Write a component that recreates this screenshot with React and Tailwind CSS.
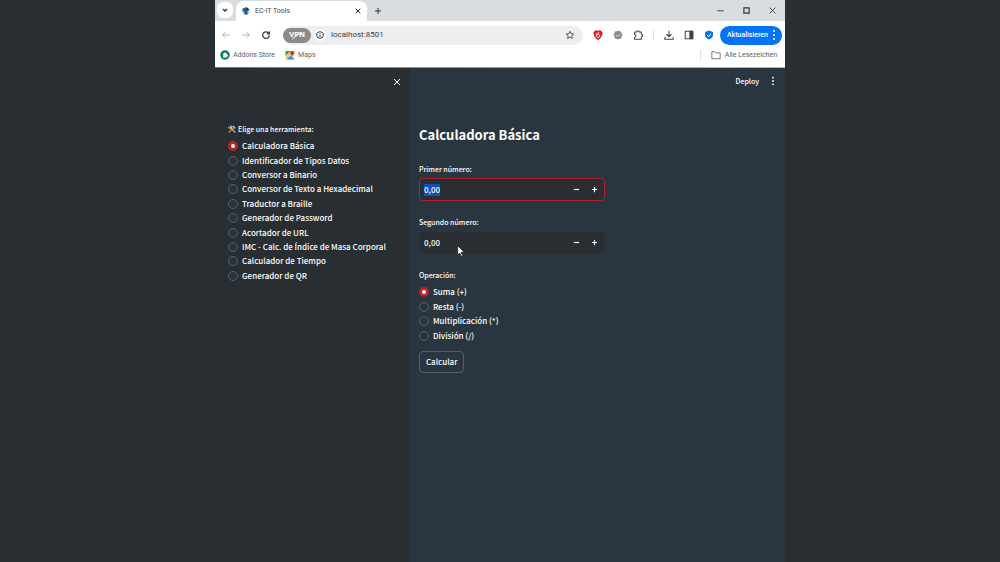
import React, { useState } from "react";

const tools = [
  "Calculadora Básica",
  "Identificador de Tipos Datos",
  "Conversor a Binario",
  "Conversor de Texto a Hexadecimal",
  "Traductor a Braille",
  "Generador de Password",
  "Acortador de URL",
  "IMC - Calc. de Índice de Masa Corporal",
  "Calculador de Tiempo",
  "Generador de QR",
];

const operations = ["Suma (+)", "Resta (-)", "Multiplicación (*)", "División (/)"];

function Icon({ children, className = "size-3", viewBox = "0 0 24 24" }) {
  return (
    <svg viewBox={viewBox} className={className} fill="none" stroke="currentColor" strokeWidth="2" aria-hidden="true">
      {children}
    </svg>
  );
}

function ToolsIcon() {
  return (
    <svg viewBox="0 0 20 20" className="size-2" aria-hidden="true">
      <path d="m6 6 11 12" stroke="#c3ced4" strokeWidth="3" strokeLinecap="round" />
      <path d="M1 4l3 3 3-3-3-3c4-1 7 2 6 6-2 3-5 3-7 2-2-1-3-3-2-5z" fill="#c3ced4" />
      <path d="M3 18 13 7" stroke="#e2953a" strokeWidth="3" strokeLinecap="round" />
      <path d="m10 3 3-2 6 5-1 4-3-1z" fill="#b3bec4" />
    </svg>
  );
}

function RadioGroup({ name, label, options, icon, listClassName }) {
  const [value, setValue] = useState(options[0]);
  return (
    <fieldset>
      <legend className="flex h-3 items-center gap-0.5 whitespace-nowrap text-[7px] leading-3">
        {icon}
        {label}
      </legend>
      <div className={listClassName}>
        {options.map((option) => (
          <label key={option} className="flex items-center gap-1 whitespace-nowrap text-[8px] leading-3">
            <input
              type="radio"
              name={name}
              checked={value === option}
              onChange={() => setValue(option)}
              className="size-2.5 shrink-0 appearance-none rounded-full border border-[#566169] bg-[#2a343b] checked:border-[3px] checked:border-[#b9212b] checked:bg-white"
            />
            {option}
          </label>
        ))}
      </div>
    </fieldset>
  );
}

function NumberField({ id, label, focused }) {
  return (
    <div>
      <label htmlFor={id} className="block text-[7px] leading-3">{label}</label>
      <div className={focused
        ? "mt-[3px] flex h-[23px] items-center rounded border border-[#b3202c] bg-[#282e31]"
        : "mt-[3px] flex h-[23px] items-center rounded border border-[#2b3439] bg-[#282e31]"}>
        <div className="relative flex min-w-0 flex-1 items-center pl-1">
          {focused && <span className="absolute left-1 h-3 w-4 bg-[#0f50c0]" />}
          <input id={id} type="text" inputMode="decimal" defaultValue="0,00" className="relative w-full min-w-0 bg-transparent text-[8px] leading-3 outline-none" />
        </div>
        <button type="button" aria-label="Restar" className="flex h-full w-[18px] items-center justify-center">
          <Icon className="size-[7px]"><path d="M3 12h18" strokeWidth="4" /></Icon>
        </button>
        <button type="button" aria-label="Sumar" className="flex h-full w-[18px] items-center justify-center">
          <Icon className="size-[7px]"><path d="M3 12h18M12 3v18" strokeWidth="4" /></Icon>
        </button>
      </div>
    </div>
  );
}

function Kebab({ className }) {
  return (
    <svg viewBox="0 0 4 12" className={className} fill="currentColor" aria-hidden="true">
      <circle cx="2" cy="2" r="1.1" /><circle cx="2" cy="6" r="1.1" /><circle cx="2" cy="10" r="1.1" />
    </svg>
  );
}

function TabStrip() {
  return (
    <div className="flex h-[21px] items-end bg-[#dadddf] pl-0.5">
      <button type="button" aria-label="Buscar pestañas" className="mb-[3px] flex size-4 items-center justify-center rounded-md bg-white">
        <Icon className="size-2"><path d="m6 9 6 6 6-6" strokeWidth="4" /></Icon>
      </button>
      <div className="ml-[3px] flex h-5 w-[131px] items-center rounded-t-lg bg-white px-[5px]">
        <svg viewBox="0 0 16 16" className="size-2.5" aria-hidden="true">
          <circle cx="8" cy="8" r="6" fill="#b7d3e6" />
          <path d="M3 4l6-2 4 4-3 3 1 4-5 1-1-5-3-2z" fill="#245d8c" />
          <path d="M9 2l4 3-3 2z" fill="#173854" />
        </svg>
        <span className="ml-1 flex-1 text-[7px] leading-3 text-[#44474a]">EC-IT Tools</span>
        <button type="button" aria-label="Cerrar pestaña"><Icon className="size-2"><path d="M5 5l14 14M19 5 5 19" strokeWidth="3" /></Icon></button>
      </div>
      <button type="button" aria-label="Nueva pestaña" className="mb-1.5 ml-[7px]"><Icon className="size-2"><path d="M3 12h18M12 3v18" strokeWidth="3" /></Icon></button>
      <div className="mb-[7px] ml-auto flex gap-[19px] pr-[9px]">
        <button type="button" aria-label="Minimizar"><Icon className="size-[7px]"><path d="M1 13h22" strokeWidth="3" /></Icon></button>
        <button type="button" aria-label="Maximizar"><Icon className="size-[7px]"><path d="M3 3h18v18H3z" strokeWidth="4" /></Icon></button>
        <button type="button" aria-label="Cerrar"><Icon className="size-[7px]"><path d="m2 2 20 20M22 2 2 22" strokeWidth="3" /></Icon></button>
      </div>
    </div>
  );
}

function Toolbar() {
  return (
    <div className="flex h-7 items-center pl-1.5 pr-[3px]">
      <button type="button" aria-label="Atrás" className="text-[#a0a3a6]"><Icon className="size-2.5"><path d="M21 12H4M11 5l-7 7 7 7" /></Icon></button>
      <button type="button" aria-label="Adelante" className="ml-2.5 text-[#a0a3a6]"><Icon className="size-2.5"><path d="M3 12h17M13 5l7 7-7 7" /></Icon></button>
      <button type="button" aria-label="Recargar" className="ml-2.5 text-[#3c3f42]"><Icon className="size-2.5"><path d="M20 13a8 8 0 1 1-2.500-6.500L20 9M20 3v6h-6" strokeWidth="3" /></Icon></button>
      <div className="ml-3 flex h-[19px] min-w-0 flex-1 items-center rounded-full bg-[#eeedef]">
        <span className="relative flex h-[15px] w-7 items-center justify-center rounded-full bg-[#8b8b8b] text-[8px] font-bold leading-none text-white">
          VPN
          <svg viewBox="0 0 28 15" className="absolute inset-0" aria-hidden="true"><path d="M9 11 19 4" stroke="#fff" /></svg>
        </span>
        <span className="ml-[3px] flex size-3 items-center justify-center rounded-full bg-white text-[#34373a]">
          <Icon className="size-2"><circle cx="12" cy="12" r="10" strokeWidth="3" /><path d="M12 11v7M12 6v3" strokeWidth="3" /></Icon>
        </span>
        <input aria-label="Dirección" defaultValue="localhost:8501" className="ml-[5px] min-w-0 flex-1 bg-transparent text-[8px] leading-3 text-[#3c3f42] outline-none" />
        <button type="button" aria-label="Marcador" className="mr-2 text-[#4a4d50]"><Icon className="size-2.5"><path d="m12 3 2.700 6 6.500.6-4.900 4.300 1.500 6.400L12 17l-5.800 3.300 1.500-6.400L2.800 9.600l6.500-.6z" strokeWidth="2.200" /></Icon></button>
      </div>
      <div className="ml-2.5 flex items-center gap-2.5 text-[#3f4245]">
        <svg viewBox="0 0 20 20" className="size-2.5" aria-hidden="true"><path d="M4 1h12l3 4c0 7-3 12-9 15C4 17 1 12 1 5z" fill="#df1c22" /><path d="M12.500 6c-3-1-6 1-6 5 0 2 1.500 4 3.500 4s3.500-1.500 3.500-3-1-3-3-3-3 1-3 2.500" fill="none" stroke="#fff" strokeWidth="2" /></svg>
        <svg viewBox="0 0 20 20" className="size-2.5" aria-hidden="true"><path d="m10 1 3 1.500 3.500.5.500 3.500L19 10l-2 3.500-.5 3.500-3.500.5L10 19l-3-1.500-3.500-.5-.5-3.500L1 10l2-3.500L3.500 3 7 2.500z" fill="#8c8c8c" /><path d="m6 10 3 3 5-5" fill="none" stroke="#e6e6e6" strokeWidth="2" /></svg>
        <Icon className="size-2.5"><path d="M4 5h5a3 3 0 0 1 6 0h5v5a3 3 0 0 1 0 6v6H4v-5a3 3 0 0 0 0-6z" strokeWidth="2.500" strokeLinejoin="round" /></Icon>
        <span className="h-2.5 w-px bg-[#dde1e7]" />
        <Icon className="size-2.5"><path d="M12 2v14M6 10l6 6 6-6M2 17v5h20v-5" strokeWidth="2.500" /></Icon>
        <Icon className="size-2.5"><path d="M3 3h18v18H3z" strokeWidth="2.500" /><path d="M14 3h7v18h-7z" fill="currentColor" /></Icon>
        <svg viewBox="0 0 20 20" className="size-2.5" aria-hidden="true"><path d="m10 1 8 3v6c0 4-3 7-8 9-5-2-8-5-8-9V4z" fill="#0877ed" /><path d="m6 10 3 3 5-5" fill="none" stroke="#fff" strokeWidth="2" /></svg>
      </div>
      <button type="button" className="ml-1.5 flex h-[19px] items-center gap-1 rounded-full bg-[#0573f5] pl-[7px] pr-1.5 text-[7px] font-medium leading-none text-white">
        Aktualisieren
        <Kebab className="h-3 w-1" />
      </button>
    </div>
  );
}

function Bookmarks() {
  return (
    <nav className="flex h-[18px] items-start pl-[5px] pr-2 text-[7px] leading-3 text-[#5c5f62]">
      <a href="#addons" className="flex items-center gap-[3px]">
        <svg viewBox="0 0 20 20" className="size-2.5" aria-hidden="true"><circle cx="10" cy="10" r="9.500" fill="#0c7b50" /><path d="M6 7h2a2 2 0 1 1 4 0h2v2a2 2 0 1 1 0 4v2H6v-3a2 2 0 0 0 0-3z" fill="#fff" /></svg>
        Addons Store
      </a>
      <a href="#maps" className="ml-2.5 flex items-center gap-[3px]">
        <svg viewBox="0 0 20 20" className="size-2.5" aria-hidden="true"><path d="M1 2h18v17H1z" fill="#d7e3e8" /><path d="M1 2h10L1 12z" fill="#21a35c" /><path d="m3 19 8-8 8 8z" fill="#4688ed" /><path d="m1 14 9-8 3 3L3 19z" fill="#f7cb46" /><path d="M14 13c0-3-4-4-4-7a4.500 4.500 0 1 1 9 0c0 3-4 4-5 7" fill="#e14235" /><circle cx="14.500" cy="6" r="1.500" fill="#81221c" /></svg>
        Maps
      </a>
      <span className="ml-auto mr-2.5 mt-px h-2.5 w-px bg-[#dde1e7]" />
      <a href="#all" className="flex items-center gap-1">
        <Icon className="size-2.5"><path d="M2 4h7l3 3h10v14H2z" /></Icon>
        Alle Lesezeichen
      </a>
    </nav>
  );
}

export default function App() {
  return (
    <div className="flex min-h-screen justify-center bg-[#282e31] font-['Noto_Sans_CJK_SC','Noto_Sans',sans-serif] font-medium text-white">
      <div className="flex w-[57%] min-w-0 flex-col">
        <header className="bg-white font-['Roboto','Noto_Sans',sans-serif] font-normal text-[#303336]">
          <TabStrip />
          <Toolbar />
          <Bookmarks />
          <div className="h-px bg-linear-to-r from-[#d9503c] via-[#d98a50] to-[#c8c850]" />
        </header>
        <div className="flex flex-1">
          <aside className="w-[34.2%] shrink-0 bg-[#282e31] px-[13px] pt-2.5">
            <div className="-mr-1 flex justify-end"><button type="button" aria-label="Cerrar menú"><Icon className="size-2"><path d="M3 3l18 18M21 3 3 21" strokeWidth="3" /></Icon></button></div>
            <div className="pt-[37px]">
              <RadioGroup name="tool" label="Elige una herramienta:" options={tools} icon={<ToolsIcon />} listClassName="mt-1 grid h-36 auto-rows-fr" />
            </div>
          </aside>
          <main className="relative min-w-0 flex-1 bg-[#2a363f]">
            <div className="flex items-center justify-end gap-3 pr-2.5 pt-[7px] text-[7px] leading-3">
              <button type="button">Deploy</button>
              <button type="button" aria-label="Menú"><Kebab className="h-2.5 w-1" /></button>
            </div>
            <form className="w-[52%] pl-[9px] pt-[38px]" onSubmit={(e) => e.preventDefault()}>
              <h1 className="whitespace-nowrap text-[13px] font-bold leading-5">Calculadora Básica</h1>
              <div className="mt-[18px]"><NumberField id="first" label="Primer número:" focused /></div>
              <div className="mt-[15px]"><NumberField id="second" label="Segundo número:" /></div>
              <div className="mt-[15px]"><RadioGroup name="operation" label="Operación:" options={operations} listClassName="mt-1 grid h-[58px] auto-rows-fr" /></div>
              <button type="submit" className="mt-2 h-[22px] rounded border border-[#52606a] px-1.5 text-[8px] leading-3">Calcular</button>
            </form>
            <svg viewBox="0 0 12 18" className="absolute left-[47px] top-[176px] h-3.5 w-2" aria-hidden="true"><path d="M1 1v14l3-3 3 6 2-1-3-6h5z" fill="#fff" stroke="#111" /></svg>
          </main>
        </div>
      </div>
    </div>
  );
}
